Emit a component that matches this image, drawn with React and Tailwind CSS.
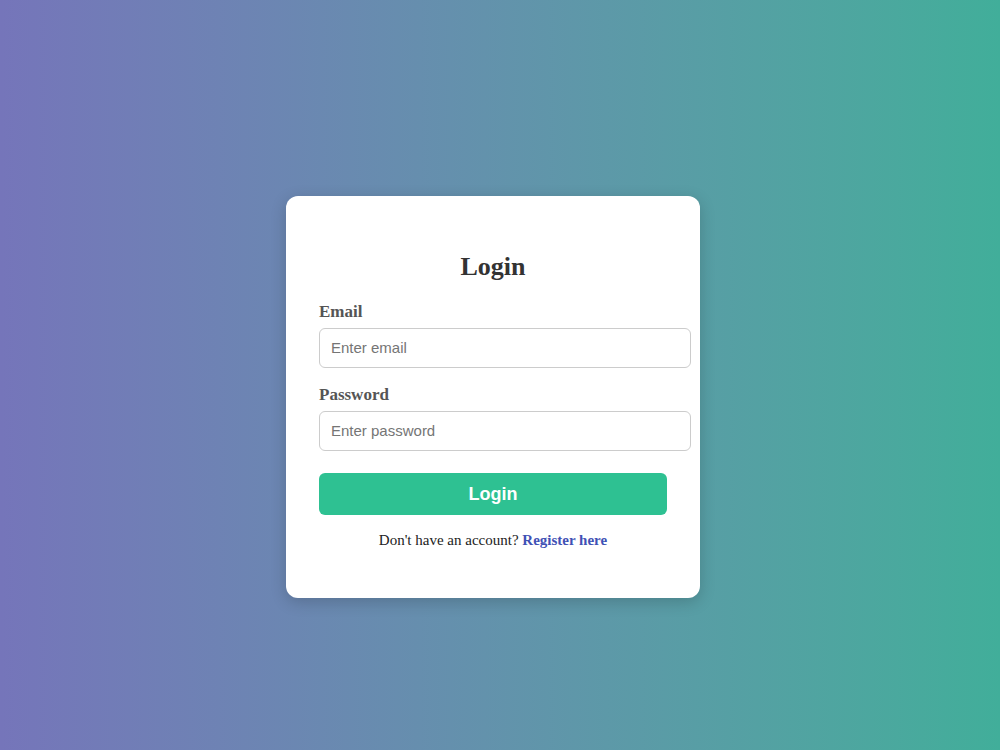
export default function App() {
  return (
    <div className="min-h-[750px] w-full bg-gradient-to-r from-[#7575ba] to-[#41ae9a] pl-[286px] pt-[196px] font-['Liberation_Serif',serif]">
      <div className="w-[414px] rounded-xl bg-white pl-[33px] pr-[31px] pt-[32px] pb-[49px] shadow-[0_4px_16px_rgba(0,0,0,0.18)]">
        <h2 className="mt-[24px] pr-[2px] text-center text-[26px] font-bold leading-[30px] text-[#333]">Login</h2>

        <label className="mt-[20px] block text-[17px] font-bold leading-[20px] text-[#555]">Email</label>
        <input
          type="email"
          placeholder="Enter email"
          className="mt-[6px] block h-[40px] w-[372px] rounded-md border border-[#ccc] px-[11px] pb-[2px] font-['Liberation_Sans',sans-serif] text-[15px] text-[#333] placeholder:text-[#757575] outline-none"
        />

        <label className="mt-[17px] block text-[17px] font-bold leading-[20px] text-[#555]">Password</label>
        <input
          type="password"
          placeholder="Enter password"
          className="mt-[6px] block h-[40px] w-[372px] rounded-md border border-[#ccc] px-[11px] pb-[2px] font-['Liberation_Sans',sans-serif] text-[15px] text-[#333] placeholder:text-[#757575] outline-none"
        />

        <button className="mt-[22px] block h-[42px] w-[348px] rounded-md bg-[#2ec192] font-['Liberation_Sans',sans-serif] text-[18px] font-bold text-white">
          Login
        </button>

        <p className="mt-[16px] w-[348px] text-center text-[15px] leading-[18px] text-[#222]">
          Don't have an account? <a href="#" className="font-bold text-[#3f51b5]">Register here</a>
        </p>
      </div>
    </div>
  );
}
